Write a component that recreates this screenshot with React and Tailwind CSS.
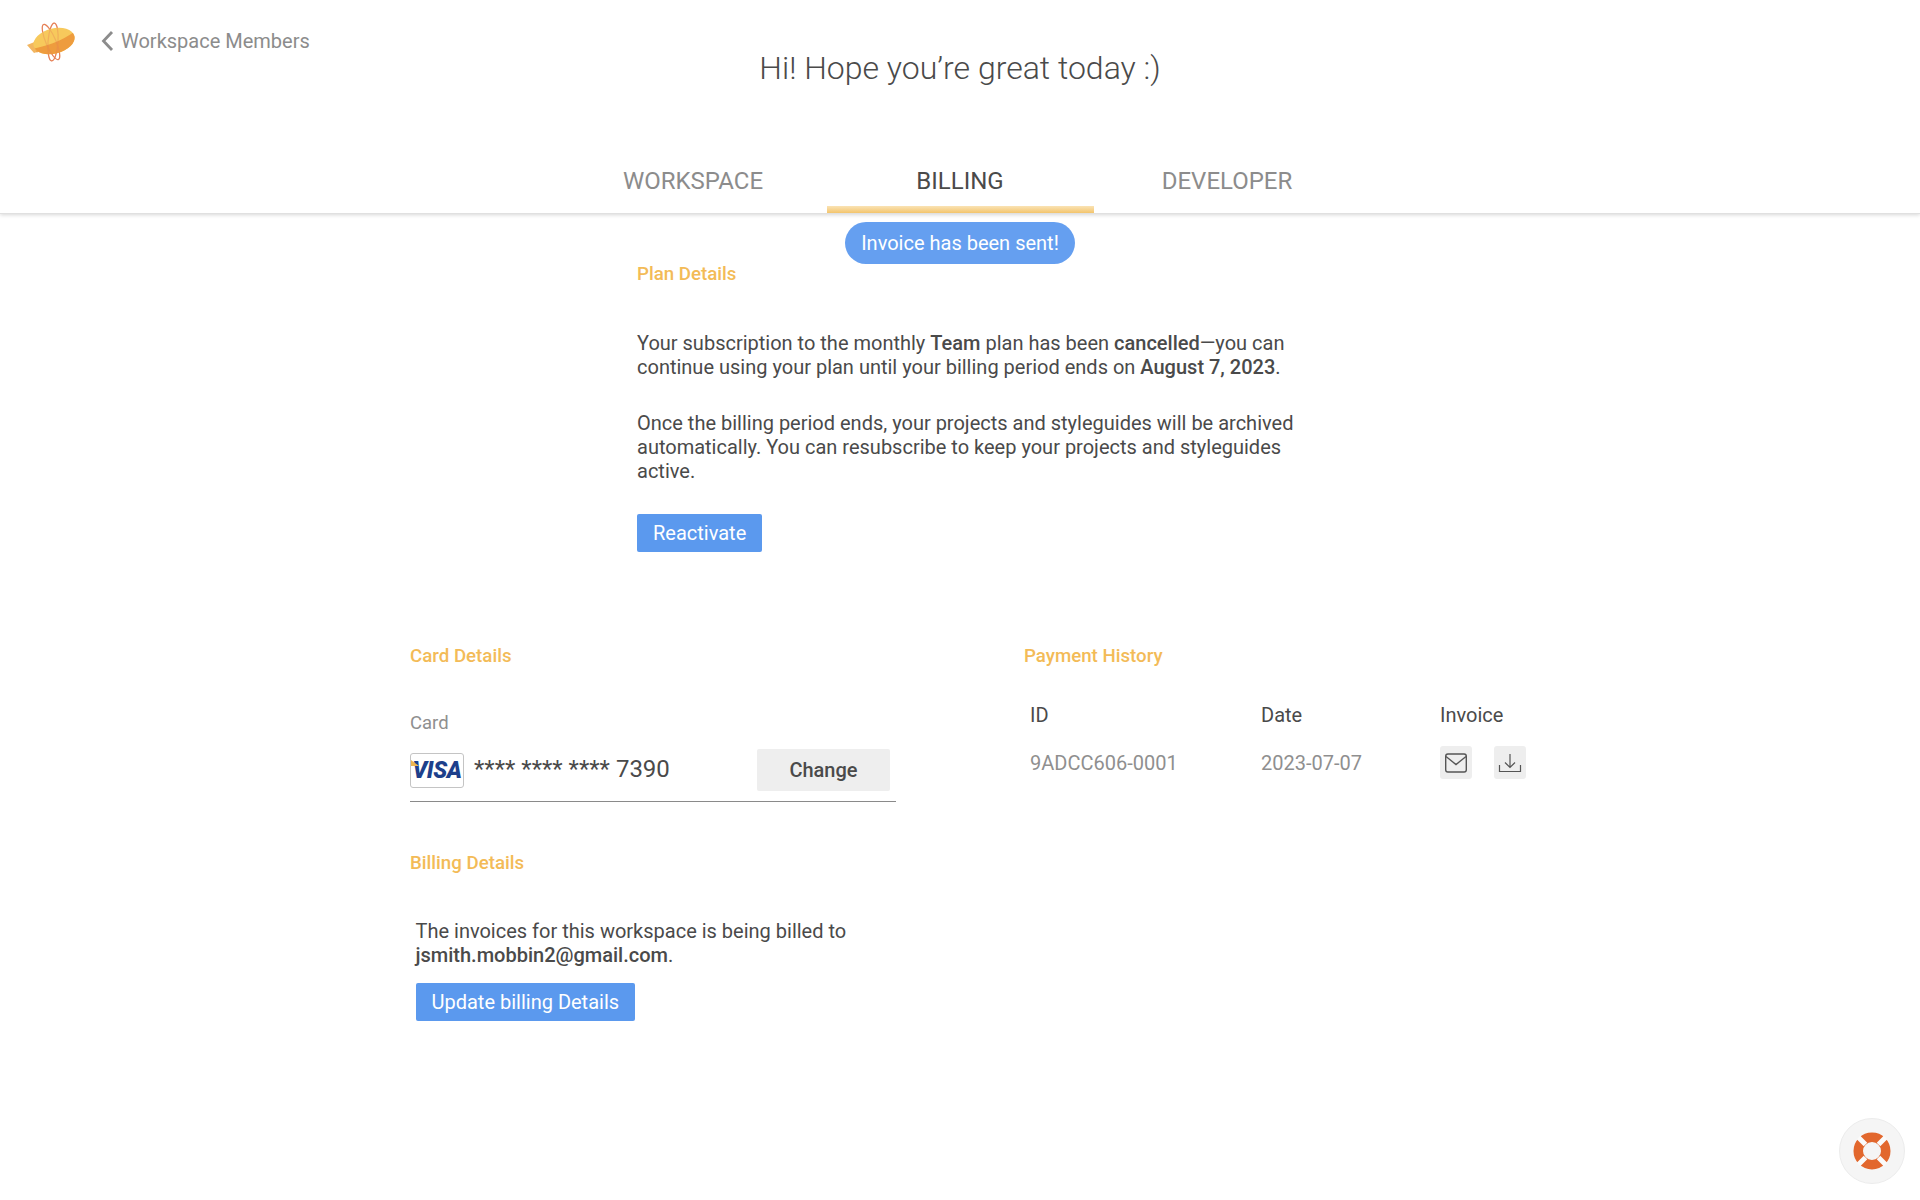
function Logo() {
  const rings = (
    <>
      <ellipse cx="24" cy="22" rx="5" ry="19" transform="rotate(-23 24 22)" stroke="#e67f55" strokeWidth="1.2" />
      <ellipse cx="26" cy="22" rx="5" ry="19" transform="rotate(4 26 22)" stroke="#e67f55" strokeWidth="1.2" />
    </>
  )
  return (
    <svg width="50" height="42" viewBox="0 0 50 42" fill="none">
      <defs>
        <clipPath id="zeppelin-body">
          <ellipse cx="27" cy="21" rx="21" ry="12.5" transform="rotate(-14 27 21)" />
        </clipPath>
      </defs>
      <path d="M0 25l10-4 3 10-6 2z" fill="#f2b661" />
      <path d="M7 26l7-1-4 8z" fill="#ec9f45" />
      {rings}
      <ellipse cx="27" cy="21" rx="21" ry="12.5" transform="rotate(-14 27 21)" fill="#f7c95c" />
      <path d="M4 29C16 27 34 22 50 10v30H4z" fill="#ee9c3e" clipPath="url(#zeppelin-body)" />
      <g opacity="0.35">{rings}</g>
    </svg>
  )
}

function VisaBadge() {
  return (
    <div className="w-[54px] h-[35px] border border-[#c4c4c4] rounded-[3px] flex items-center justify-center relative overflow-hidden bg-white">
      <div className="absolute left-0 top-[6px] w-[8px] h-[6px] bg-[#eeb54f] [clip-path:polygon(0_0,100%_100%,0_100%)]" />
      <span className="text-[#1d3f8b] text-[23px] font-black italic tracking-[-0.4px] leading-none">VISA</span>
    </div>
  )
}

function LifeRing() {
  return (
    <svg width="40" height="40" viewBox="0 0 40 40" fill="none">
      <circle cx="20" cy="20" r="13.75" stroke="#e2672d" strokeWidth="9.5" />
      <path d="M6.5 6.5l7 7M33.5 6.5l-7 7M6.5 33.5l7-7M33.5 33.5l-7-7" stroke="#fafafa" strokeWidth="5" />
    </svg>
  )
}

function MailIcon() {
  return (
    <svg width="24" height="22" viewBox="0 0 24 22" fill="none" stroke="#555555" strokeWidth="1.4">
      <rect x="1.7" y="2" width="20.6" height="18" rx="2.2" />
      <path d="M2 4.5l10 8 10-8" />
    </svg>
  )
}

function DownloadIcon() {
  return (
    <svg width="24" height="22" viewBox="0 0 24 22" fill="none" stroke="#555555" strokeWidth="1.2">
      <path d="M1.5 13v6.5h21V13" />
      <path d="M12 2v13M7 10.5l5 5 5-5" />
    </svg>
  )
}

function SectionTitle({ children }) {
  return <h2 className="text-[18.7px] leading-6 font-medium text-[#f3bb57]">{children}</h2>
}

function BlueButton({ children }) {
  return (
    <button type="button" className="h-[38px] px-4 rounded-[2px] bg-[#5b99ee] text-white text-[20px]">
      {children}
    </button>
  )
}

function IconButton({ children }) {
  return (
    <button type="button" className="w-8 h-[33px] rounded-[3px] bg-[#eeeeee] flex items-center justify-center">
      {children}
    </button>
  )
}

export default function App() {
  return (
    <div className="w-[1920px] h-[1200px] bg-white relative overflow-hidden text-[#4a4a4a] font-['Roboto',sans-serif]">
      <header className="h-[214px] border-b border-[#e0e0e0] shadow-[0_1px_4px_rgba(0,0,0,0.16)] flex flex-col">
        <div className="grid grid-cols-[1fr_auto_1fr] flex-1">
          <div className="flex items-start pl-[27px] pt-[20px]">
            <Logo />
            <a className="flex items-center ml-[24px] mt-[1px] h-10 text-[20px] text-[#8c8c8c]">
              <svg width="13" height="22" viewBox="0 0 13 22" fill="none" stroke="#8c8c8c" strokeWidth="2.8" className="mr-[7px]">
                <path d="M11 2L2.5 11l8.5 9" />
              </svg>
              Workspace Members
            </a>
          </div>
          <h1 className="pt-[47px] text-[32px] leading-[42px] font-light text-[#4a4a4a]">Hi! Hope you’re great today :)</h1>
          <div />
        </div>
        <nav className="flex justify-center">
          <div className="w-[267px] h-[59px] flex items-start justify-center pt-[11px] text-[24px] leading-8 text-[#8c8c8c]">WORKSPACE</div>
          <div className="w-[267px] h-[59px] flex flex-col items-center justify-between pt-[11px] text-[24px] leading-8 text-[#4a4a4a]">
            BILLING
            <div className="w-full h-[7px] bg-gradient-to-b from-[#fae3b4] to-[#f3c46b]" />
          </div>
          <div className="w-[267px] h-[59px] flex items-start justify-center pt-[11px] text-[24px] leading-8 text-[#8c8c8c]">DEVELOPER</div>
        </nav>
      </header>

      <div className="absolute left-[845px] top-[222px] w-[230px] h-[42px] rounded-[21px] bg-[#659ff0] text-white text-[20px] flex items-center justify-center">
        Invoice has been sent!
      </div>

      <main className="w-[1100px] mx-auto">
        <section className="pl-[227px] pt-[48px]">
          <SectionTitle>Plan Details</SectionTitle>
          <p className="mt-[45px] w-[680px] text-[20px] leading-6">
            Your subscription to the monthly <b className="font-medium">Team</b> plan has been{" "}
            <b className="font-medium">cancelled</b>—you can
            <br />
            continue using your plan until your billing period ends on <b className="font-medium">August 7, 2023</b>.
          </p>
          <p className="mt-[32px] w-[680px] text-[20px] leading-6">
            Once the billing period ends, your projects and styleguides will be archived
            <br />
            automatically. You can resubscribe to keep your projects and styleguides
            <br />
            active.
          </p>
          <div className="mt-[31px]">
            <BlueButton>Reactivate</BlueButton>
          </div>
        </section>

        <div className="grid grid-cols-[614px_1fr] mt-[92px]">
          <div>
            <SectionTitle>Card Details</SectionTitle>
            <div className="mt-[43px] text-[18.5px] leading-6 text-[#8f8f8f]">Card</div>
            <div className="w-[486px] h-[53px] mt-[14px] border-b border-[#8a8a8a] flex items-start">
              <div className="mt-[4px]">
                <VisaBadge />
              </div>
              <div className="ml-[10px] mt-[4px] text-[24px] leading-8">**** **** **** 7390</div>
              <button type="button" className="ml-auto mr-[6px] w-[133px] h-[42px] rounded-[2px] bg-[#eeeeee] text-[20px] font-medium">
                Change
              </button>
            </div>

            <div className="mt-[49px]">
              <SectionTitle>Billing Details</SectionTitle>
            </div>
            <p className="mt-[44px] ml-[5.5px] text-[20px] leading-6">
              The invoices for this workspace is being billed to
              <br />
              <b className="font-medium">jsmith.mobbin2@gmail.com</b>.
            </p>
            <div className="mt-[16px] ml-[5.5px]">
              <BlueButton>Update billing Details</BlueButton>
            </div>
          </div>

          <div>
            <SectionTitle>Payment History</SectionTitle>
            <div className="grid grid-cols-[231px_179px_1fr] pl-[6px] mt-[35px]">
              <div className="text-[20px] leading-6">ID</div>
              <div className="text-[20px] leading-6">Date</div>
              <div className="text-[20px] leading-6">Invoice</div>
              <div className="mt-[24px] text-[20px] leading-6 text-[#8f8f8f]">9ADCC606-0001</div>
              <div className="mt-[24px] text-[20px] leading-6 text-[#8f8f8f]">2023-07-07</div>
              <div className="mt-[19px] flex gap-[22px]">
                <IconButton><MailIcon /></IconButton>
                <IconButton><DownloadIcon /></IconButton>
              </div>
            </div>
          </div>
        </div>
      </main>

      <button type="button" className="absolute left-[1839px] top-[1118px] w-[66px] h-[66px] rounded-full bg-[#f5f5f5] border border-[#ececec] flex items-center justify-center">
        <LifeRing />
      </button>
    </div>
  )
}
